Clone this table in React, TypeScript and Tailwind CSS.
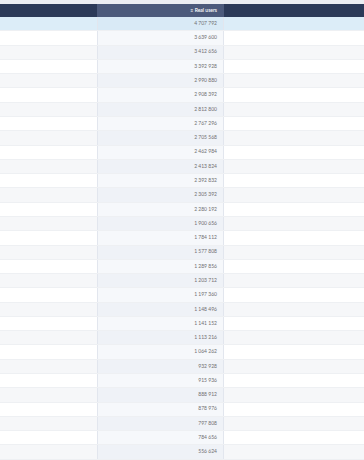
const values = [
  "4 707 792",
  "3 639 600",
  "3 412 656",
  "3 392 928",
  "2 990 880",
  "2 908 392",
  "2 812 800",
  "2 767 296",
  "2 705 568",
  "2 462 984",
  "2 413 824",
  "2 392 832",
  "2 305 392",
  "2 280 192",
  "1 900 656",
  "1 784 112",
  "1 577 808",
  "1 289 856",
  "1 203 712",
  "1 197 360",
  "1 148 496",
  "1 141 152",
  "1 113 216",
  "1 064 262",
  "932 928",
  "915 936",
  "888 912",
  "878 976",
  "797 808",
  "784 656",
  "556 624",
];

export default function App() {
  return (
    <div
      className="w-[364px] h-[460px] overflow-hidden bg-white flex flex-col"
      style={{ fontFamily: "Lato, 'Liberation Sans', sans-serif" }}
    >
      <div className="h-[4px] bg-[#eceef2] shrink-0" />
      <div className="h-[13px] shrink-0 flex bg-[#2c3a58] text-white text-[5px]">
        <div className="w-[97px]" />
        <div className="w-[127px] bg-[#4c5a7b] flex items-center justify-end pr-[7px] font-semibold">
          ≡ Real users
        </div>
        <div className="flex-1" />
      </div>
      {values.map((v, i) => {
        const row =
          i === 0
            ? "bg-[#dcedf8]"
            : i % 2 === 0
              ? "bg-[#f6f7f9]"
              : "bg-white";
        const mid =
          i === 0
            ? "bg-[#d9eaf6]"
            : i % 2 === 0
              ? "bg-[#eff2f7]"
              : "bg-[#f6f8fb]";
        return (
          <div
            key={v}
            className={`h-[14.29px] shrink-0 flex border-b border-[#eef0f3] ${row}`}
          >
            <div className="w-[97px]" />
            <div
              className={`w-[127px] flex items-center justify-end pr-[6px] text-[5px] text-[#6f6f72] border-l border-r border-[#e2e6ee] ${mid}`}
            >
              {v}
            </div>
            <div className="flex-1" />
          </div>
        );
      })}
    </div>
  );
}
